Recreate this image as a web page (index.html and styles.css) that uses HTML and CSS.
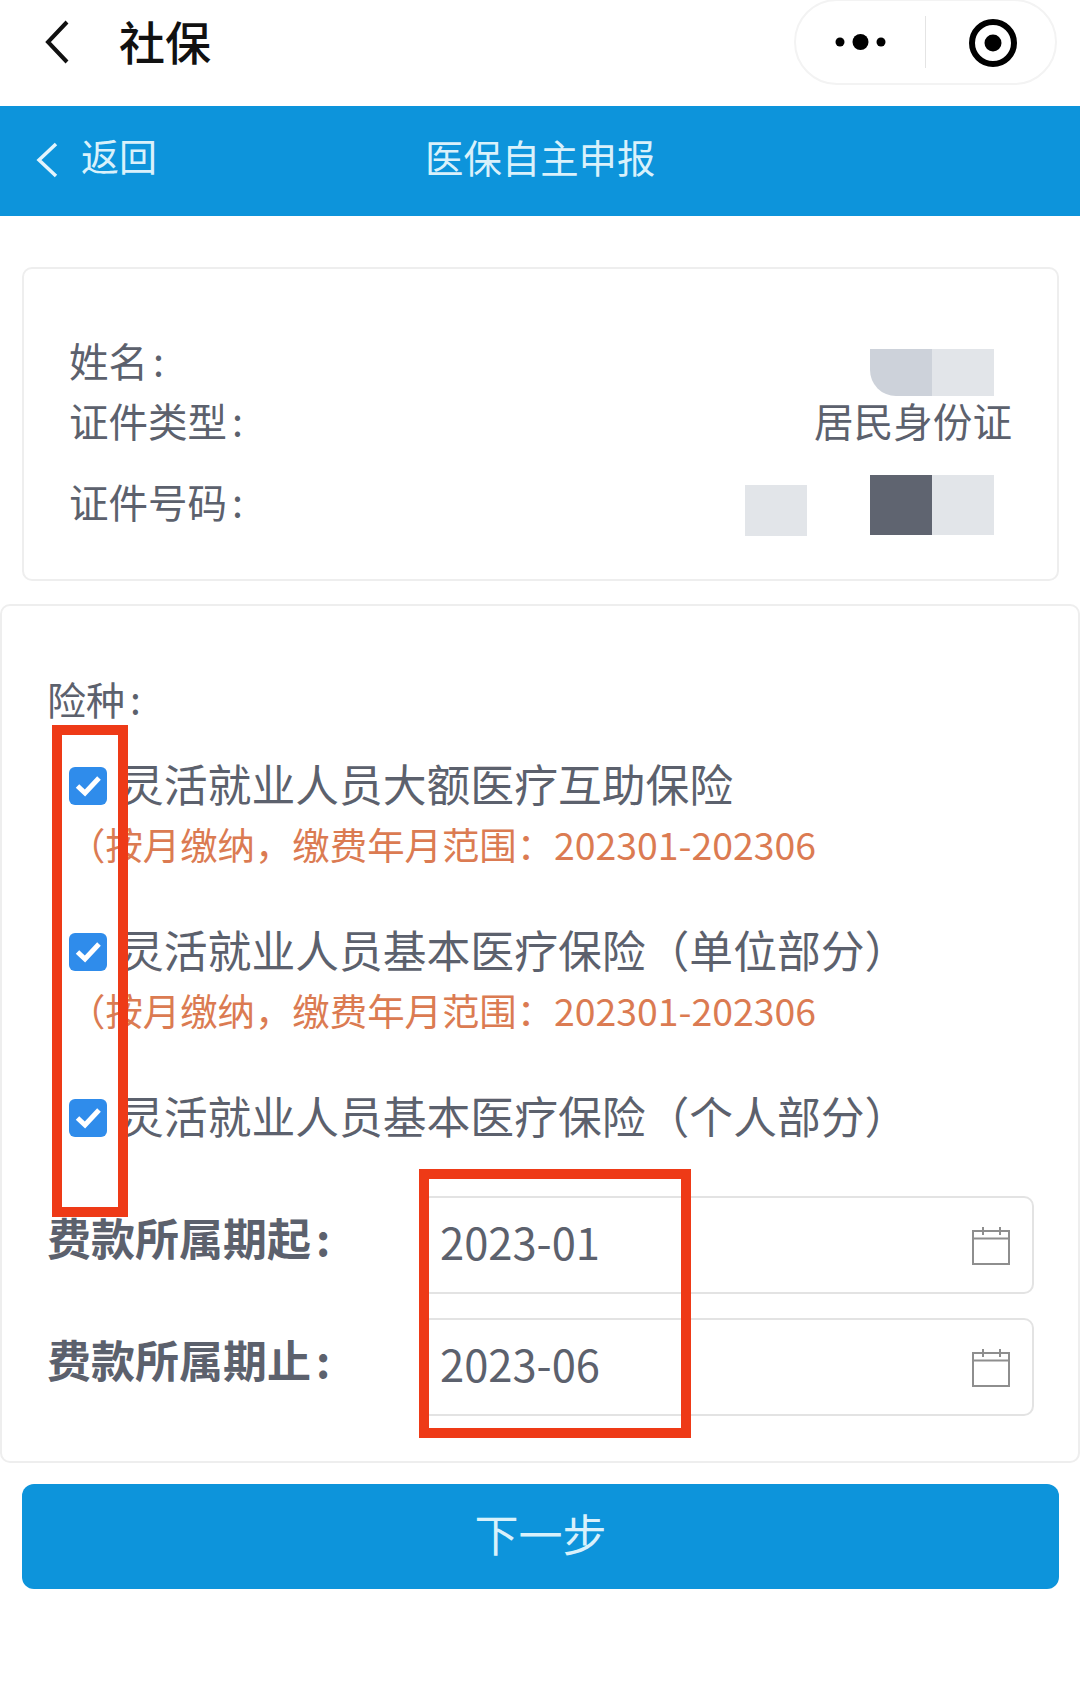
FILE: index.html
```html
<!DOCTYPE html>
<html lang="zh-CN">
<head>
<meta charset="utf-8">
<title>社保</title>
<link rel="stylesheet" href="styles.css">
</head>
<body>
<div class="page">
  <header class="wx-bar">
    <svg class="wx-back" viewBox="0 0 26 44"><path d="M23 2 L4 22 L23 42"/></svg>
    <div class="wx-title">社保</div>
    <div class="capsule">
      <div class="capsule-cell">
        <svg class="more" viewBox="0 0 52 18"><circle cx="5" cy="9" r="4.5"/><circle cx="25.5" cy="9" r="8"/><circle cx="46" cy="9" r="4.5"/></svg>
      </div>
      <div class="capsule-divider"></div>
      <div class="capsule-cell">
        <svg class="record" viewBox="0 0 48 48"><circle class="ring" cx="24" cy="24" r="21"/><circle cx="24" cy="24" r="8.5"/></svg>
      </div>
    </div>
  </header>

  <nav class="app-bar">
    <svg class="app-back" viewBox="0 0 24 36"><path d="M21 2 L4 18 L21 34"/></svg>
    <div class="app-back-text">返回</div>
    <div class="app-title">医保自主申报</div>
  </nav>

  <section class="card info-card">
    <div class="info-row">
      <div class="info-label">姓名<span class="colon">:</span></div>
      <div class="redact-group redact-name">
        <div class="redact redact-mid redact-round"></div>
        <div class="redact redact-light"></div>
      </div>
    </div>
    <div class="info-row">
      <div class="info-label">证件类型<span class="colon">:</span></div>
      <div class="info-value">居民身份证</div>
    </div>
    <div class="info-row info-row-id">
      <div class="info-label">证件号码<span class="colon">:</span></div>
      <div class="redact-group redact-id">
        <div class="redact redact-light redact-short"></div>
        <div class="redact redact-dark redact-spaced"></div>
        <div class="redact redact-light"></div>
      </div>
    </div>
  </section>

  <section class="card form-card">
    <div class="section-label">险种<span class="colon">:</span></div>

    <div class="option">
      <div class="option-title">
        <svg class="checkbox" viewBox="0 0 38 38"><rect width="38" height="38" rx="6"/><path d="M8.5 19 L16 26 L30 11"/></svg>
        <span class="option-text">灵活就业人员大额医疗互助保险</span>
      </div>
      <div class="option-note">（按月缴纳，缴费年月范围：202301-202306</div>
    </div>

    <div class="option">
      <div class="option-title">
        <svg class="checkbox" viewBox="0 0 38 38"><rect width="38" height="38" rx="6"/><path d="M8.5 19 L16 26 L30 11"/></svg>
        <span class="option-text">灵活就业人员基本医疗保险（单位部分）</span>
      </div>
      <div class="option-note">（按月缴纳，缴费年月范围：202301-202306</div>
    </div>

    <div class="option option-last">
      <div class="option-title">
        <svg class="checkbox" viewBox="0 0 38 38"><rect width="38" height="38" rx="6"/><path d="M8.5 19 L16 26 L30 11"/></svg>
        <span class="option-text">灵活就业人员基本医疗保险（个人部分）</span>
      </div>
    </div>

    <div class="date-row">
      <div class="date-label">费款所属期起<span class="colon">:</span></div>
      <div class="date-input">
        <span class="date-value">2023-01</span>
        <svg class="calendar" viewBox="0 0 38 39"><path d="M1 5 H37 V38 H1 Z M1 12.5 H37 M11 1 V9 M28 1 V9"/></svg>
      </div>
    </div>
    <div class="date-row">
      <div class="date-label">费款所属期止<span class="colon">:</span></div>
      <div class="date-input">
        <span class="date-value">2023-06</span>
        <svg class="calendar" viewBox="0 0 38 39"><path d="M1 5 H37 V38 H1 Z M1 12.5 H37 M11 1 V9 M28 1 V9"/></svg>
      </div>
    </div>
  </section>

  <button class="next-btn" type="button">下一步</button>

  <div class="mark mark-checks"></div>
  <div class="mark mark-dates"></div>
</div>
</body>
</html>
```

FILE: styles.css
```css
* { box-sizing: border-box; }

html, body {
  margin: 0;
  padding: 0;
  background: #fff;
}

body {
  font-family: "Noto Sans CJK SC", "Noto Sans", sans-serif;
  color: #5c616d;
}

.page {
  position: relative;
  width: 1080px;
  height: 1701px;
  overflow: hidden;
}

/* WeChat title bar */
.wx-bar {
  display: flex;
  align-items: center;
  height: 106px;
  padding: 0 23px 22px 44px;
  color: #000;
}

.wx-back {
  width: 26px;
  height: 44px;
  fill: none;
  stroke: #111;
  stroke-width: 4;
}

.wx-title {
  margin: -4px 0 0 49px;
  font-size: 46px;
  font-weight: 500;
  line-height: 60px;
  color: #111;
}

.capsule {
  display: flex;
  align-items: center;
  width: 263px;
  height: 86px;
  margin: 0 0 0 auto;
  border: 2px solid #f3f3f3;
  border-radius: 43px;
}

.capsule-cell {
  display: flex;
  flex: 1;
  justify-content: center;
  align-items: center;
}

.capsule-divider {
  width: 1px;
  height: 52px;
  background: #e4e4e4;
}

.more {
  width: 52px;
  height: 18px;
  fill: #000;
}

.record {
  width: 48px;
  height: 48px;
  margin: 2px 0 0 5px;
  fill: #000;
}

.record .ring {
  fill: none;
  stroke: #000;
  stroke-width: 6;
}

/* Blue app bar */
.app-bar {
  position: relative;
  display: flex;
  align-items: center;
  height: 110px;
  padding-left: 35px;
  background: #0d94db;
  color: #d9f1fb;
}

.app-back {
  width: 24px;
  height: 36px;
  margin-top: -2px;
  fill: none;
  stroke: #e3f4fc;
  stroke-width: 3.5;
}

.app-back-text {
  margin: -12px 0 0 22px;
  font-size: 38px;
  line-height: 50px;
}

.app-title {
  position: absolute;
  left: 425px;
  top: 25px;
  font-size: 38.4px;
  line-height: 50px;
}

/* Cards */
.card {
  border: 2px solid #eeeeee;
  border-radius: 10px;
  background: #fff;
}

.info-card {
  width: 1037px;
  height: 314px;
  margin: 51px 0 0 22px;
  padding: 64px 45px 0 45px;
}

.info-row {
  display: flex;
  justify-content: space-between;
  height: 60px;
}

.info-row-id {
  margin-top: 21px;
}

.info-label {
  font-size: 39.5px;
  line-height: 54px;
}

.colon {
  margin-left: 5px;
}

.info-value {
  font-size: 39.6px;
  line-height: 54px;
}

.redact-group {
  display: flex;
  margin-right: 18px;
}

.redact {
  width: 62px;
  height: 60px;
}

.redact-name {
  padding-top: 16px;
}

.redact-name .redact {
  height: 47px;
}

.redact-id {
  margin-top: 1px;
}

.redact-light { background: #e2e5e9; }
.redact-mid { background: #cdd2da; }
.redact-dark { background: #5f6470; }
.redact-round { border-radius: 0 0 0 26px; }
.redact-short { height: 51px; margin-top: 10px; }
.redact-spaced { margin-left: 63px; }

.form-card {
  width: 1080px;
  height: 859px;
  margin-top: 23px;
  padding: 65px 44px 0 48px;
}

.section-label {
  height: 60px;
  margin-left: -3px;
  font-size: 39px;
  line-height: 54px;
}

.option {
  margin-top: 25px;
  margin-bottom: 44px;
}

.option-last {
  margin-bottom: 48px;
}

.option + .option {
  margin-top: 0;
}

.option-title {
  display: flex;
  align-items: center;
  height: 60px;
  padding-left: 19px;
  font-size: 43.8px;
  white-space: nowrap;
}

.option-text {
  padding-bottom: 6px;
  line-height: 60px;
}

.checkbox {
  flex: none;
  width: 38px;
  height: 38px;
  margin-right: 13px;
}

.checkbox rect {
  fill: #2f8ceb;
}

.checkbox path {
  fill: none;
  stroke: #fff;
  stroke-width: 5;
}

.option-note {
  height: 62px;
  padding-left: 18px;
  font-size: 37.4px;
  line-height: 56px;
  color: #db7b52;
  white-space: nowrap;
}

.date-row {
  display: flex;
  margin-bottom: 24px;
}

.date-label {
  width: 373px;
  margin: -8px 0 0 -3px;
  font-size: 44px;
  font-weight: 700;
  line-height: 98px;
  white-space: nowrap;
}

.date-input {
  display: flex;
  justify-content: space-between;
  align-items: center;
  width: 614px;
  height: 98px;
  padding: 0 22px 0 18px;
  border: 2px solid #e3e3e3;
  border-radius: 10px;
  font-size: 43.5px;
}

.date-value {
  padding-bottom: 8px;
}

.calendar {
  width: 38px;
  height: 39px;
  fill: none;
  stroke: #8e8e8e;
  stroke-width: 2;
}

.next-btn {
  display: block;
  width: 1037px;
  height: 105px;
  margin: 21px 0 0 22px;
  padding: 0 0 6px;
  border: 0;
  border-radius: 12px;
  background: #0d94db;
  color: #d9f1fb;
  font-family: inherit;
  font-size: 44px;
  line-height: 99px;
}

/* Red annotation boxes drawn over the form */
.mark {
  position: absolute;
  border: 10px solid #ee3a17;
}

.mark-checks {
  left: 52px;
  top: 725px;
  width: 76px;
  height: 492px;
}

.mark-dates {
  left: 419px;
  top: 1169px;
  width: 272px;
  height: 269px;
}
```
